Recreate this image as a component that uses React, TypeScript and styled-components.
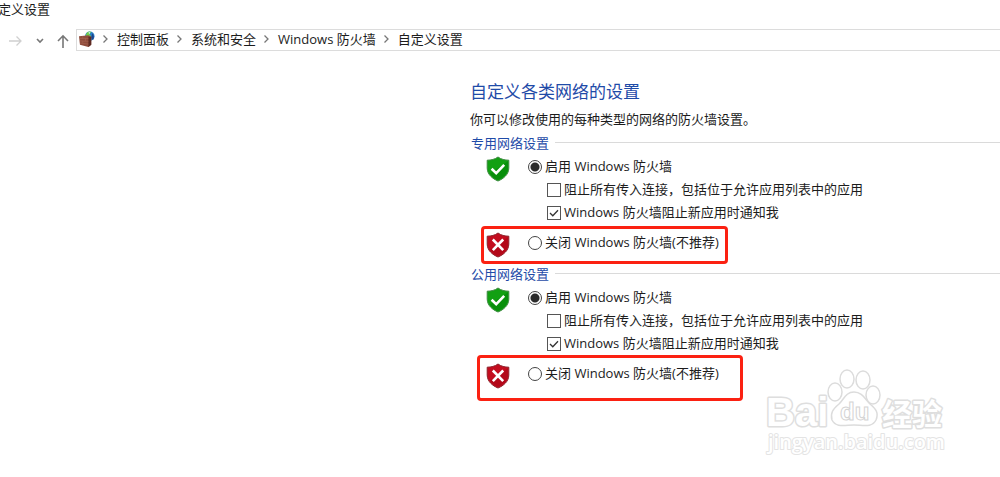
import React, { useState } from "react";
import styled, { createGlobalStyle } from "styled-components";

const GlobalStyle = createGlobalStyle`
  * { box-sizing: border-box; }
  body {
    margin: 0;
    background: #fff;
    color: #1c1c1c;
    font: 13px/20px "Open Sans", "Noto Sans CJK SC", sans-serif;
    overflow-x: hidden;
  }
`;

const Page = styled.div`
  position: relative;
  min-height: 100vh;
  overflow: hidden;
`;

const TitleBar = styled.header`
  height: 29px;
  margin-left: -2px;
  line-height: 18px;
`;

const NavBar = styled.nav`
  display: flex;
  height: 22px;
`;

const NavButtons = styled.div`
  display: flex;
  align-items: center;
  justify-content: space-between;
  width: 76px;
  padding: 2px 6px 0 8px;
`;

const NavButton = styled.button`
  display: flex;
  padding: 0;
  border: 0;
  background: none;
`;

const AddressBar = styled.ol`
  display: flex;
  flex: 1;
  align-items: center;
  margin: 0;
  padding: 0 0 2px 2px;
  list-style: none;
  border: 1px solid #dcdcdc;
  border-right: 0;
`;

const Crumb = styled.li`
  display: flex;
  align-items: center;
  white-space: nowrap;
`;

const CrumbLink = styled.a`
  color: inherit;
  text-decoration: none;
`;

const Separator = styled.svg`
  width: 22px;
  height: 12px;
`;

const Main = styled.main`
  padding: 30px 0 24px 47%;
  white-space: nowrap;
`;

const Heading = styled.h1`
  margin: 0;
  font-size: 17px;
  font-weight: 400;
  line-height: 22px;
  color: #1f4ba8;
`;

const Description = styled.p`
  margin: 6px 0 2px;
`;

const Group = styled.section`
  margin-bottom: 1px;
`;

const GroupTitle = styled.h2`
  display: flex;
  align-items: center;
  gap: 6px;
  height: 23px;
  margin: 0;
  padding-left: 1px;
  font-size: 13px;
  font-weight: 400;
  color: #1f4ba8;

  &::after {
    content: "";
    flex: 1;
    height: 1px;
    background: #dadada;
  }
`;

const OptionRow = styled.div<{ $tall?: boolean }>`
  position: relative;
  display: flex;
  align-items: center;
  gap: 18px;
  height: ${(p) => (p.$tall ? 38 : 23)}px;
  padding-left: 16px;
`;

const CheckRow = styled.div`
  display: flex;
  align-items: center;
  height: 23px;
  padding-left: 77px;
`;

const Choice = styled.label`
  display: flex;
  align-items: center;
  gap: 3px;
`;

const Radio = styled.input`
  appearance: none;
  width: 14px;
  height: 14px;
  margin: 2px 0 0;
  border: 1px solid #444;
  border-radius: 50%;
  background: #fff;

  &:checked {
    background: radial-gradient(circle, #2b2b2b 4px, #fff 5px);
  }
`;

const CheckInput = styled.input`
  appearance: none;
  width: 14px;
  height: 14px;
  margin: 0;
  border: 1px solid #555;
  background: #fff;
`;

const CheckBox = styled.span`
  display: grid;
  margin-top: 2px;

  > * {
    grid-area: 1 / 1;
  }

  svg {
    pointer-events: none;
  }
`;

const ShieldIcon = styled.svg`
  flex: none;
  width: 24px;
  height: 26px;
  margin-top: 6px;
`;

const Highlight = styled.div<{ $wide?: boolean }>`
  position: absolute;
  top: ${(p) => (p.$wide ? 1 : 3)}px;
  left: ${(p) => (p.$wide ? 7 : 11)}px;
  width: ${(p) => (p.$wide ? 266 : 247)}px;
  height: ${(p) => (p.$wide ? 46 : 38)}px;
  border: 3px solid #fb2112;
  border-radius: 4px;
  pointer-events: none;
`;

const Watermark = styled.svg`
  position: absolute;
  right: 50px;
  bottom: 17px;
  width: 190px;
  height: 94px;
  pointer-events: none;
`;

const Shield = ({ blocked }: { blocked?: boolean }) => (
  <ShieldIcon viewBox="0 0 24 26" aria-hidden="true">
    <path
      d="M12 1C9 3.300 5 4.200 1.200 4.200V12C1.200 18.500 6.500 22.700 12 25C17.500 22.700 22.800 18.500 22.800 12V4.200C19 4.200 15 3.300 12 1Z"
      fill={blocked ? "#c30d1f" : "#12a012"}
      stroke={blocked ? "#8d2029" : "#3c8a3f"}
    />
    <path
      d="M22 5.200V12C22 18 17 21.800 12 24C8 22.500 5.500 20 4 17.500Z"
      fill={blocked ? "#b30819" : "#088f0b"}
    />
    {blocked ? (
      <path d="M6.800 7.500L17.200 18.200M17.200 7.500L6.800 18.200" stroke="#fff" strokeWidth="2.600" />
    ) : (
      <path d="M5.600 12.800L10.200 17.200L18.200 8.800" fill="none" stroke="#fff" strokeWidth="2.600" />
    )}
  </ShieldIcon>
);

const Chevron = () => (
  <Separator viewBox="0 0 22 12" aria-hidden="true">
    <path d="M8.500 2.500L12 6L8.500 9.500" fill="none" stroke="#777" strokeWidth="1.300" />
  </Separator>
);

const FirewallIcon = () => (
  <svg width="16" height="18" viewBox="0 0 17 18" aria-hidden="true">
    <circle cx="11.500" cy="6" r="5" fill="#2b7fc4" />
    <path d="M8 3Q10 0 13 1.500L11 4L13 6L10 8L7 6Z" fill="#6ed04a" />
    <path d="M10 2L12 1.500L11 4Z" fill="#d8f4ff" />
    <path d="M14 3Q17 6 15 10L13 8Z" fill="#1c4590" />
    <path d="M0 6L10 5L13 6.500V15L10 17.500L1 15Z" fill="#8f4c3c" />
    <path d="M10 6.500L13 6.500V15L10 17.500Z" fill="#5d2b23" />
    <path d="M1 8.500L10 8.500M1 11L10 11.500M1 13.300L10 14.300M4 6V8.500M7 8.500V11M4 11V13.500" stroke="#ad6c58" strokeWidth=".5" />
  </svg>
);

const Check = ({ label, initial }: { label: string; initial: boolean }) => {
  const [on, setOn] = useState(initial);
  return (
    <CheckRow>
      <Choice>
        <CheckBox>
          <CheckInput type="checkbox" checked={on} onChange={() => setOn(!on)} />
          {on && (
            <svg width="14" height="14" viewBox="0 0 14 14" aria-hidden="true">
              <path d="M3 7L5.800 9.800L11 4.300" fill="none" stroke="#333" strokeWidth="1.300" />
            </svg>
          )}
        </CheckBox>
        {label}
      </Choice>
    </CheckRow>
  );
};

const NetworkGroup = ({ id, title, wide }: { id: string; title: string; wide?: boolean }) => (
  <Group role="radiogroup" aria-labelledby={id}>
    <GroupTitle id={id}>{title}</GroupTitle>
    <OptionRow>
      <Shield />
      <Choice>
        <Radio type="radio" name={`${id}-state`} defaultChecked />
        启用 Windows 防火墙
      </Choice>
    </OptionRow>
    <Check label="阻止所有传入连接，包括位于允许应用列表中的应用" initial={false} />
    <Check label="Windows 防火墙阻止新应用时通知我" initial />
    <OptionRow $tall>
      <Shield blocked />
      <Choice>
        <Radio type="radio" name={`${id}-state`} />
        关闭 Windows 防火墙(不推荐)
      </Choice>
      <Highlight $wide={wide} />
    </OptionRow>
  </Group>
);

const crumbs = ["控制面板", "系统和安全", "Windows 防火墙", "自定义设置"];

export default function App() {
  return (
    <Page>
      <GlobalStyle />
      <TitleBar>定义设置</TitleBar>
      <NavBar>
        <NavButtons>
          <NavButton aria-label="前进">
            <svg width="14" height="12" viewBox="0 0 14 12" fill="none" stroke="#d0d0d0" strokeWidth="1.300">
              <path d="M1 6H13M8.500 1.500L13 6L8.500 10.500" />
            </svg>
          </NavButton>
          <NavButton aria-label="最近位置">
            <svg width="10" height="8" viewBox="0 0 10 8" fill="none" stroke="#777" strokeWidth="1.600">
              <path d="M3 2L6 5L9 2" />
            </svg>
          </NavButton>
          <NavButton aria-label="上移">
            <svg width="14" height="14" viewBox="0 0 14 14" fill="none" stroke="#777" strokeWidth="1.600">
              <path d="M7 14V2M2 7L7 1.800L12 7" />
            </svg>
          </NavButton>
        </NavButtons>
        <AddressBar>
          <FirewallIcon />
          {crumbs.map((name) => (
            <Crumb key={name}>
              <Chevron />
              <CrumbLink href="#">{name}</CrumbLink>
            </Crumb>
          ))}
        </AddressBar>
      </NavBar>
      <Main>
        <Heading>自定义各类网络的设置</Heading>
        <Description>你可以修改使用的每种类型的网络的防火墙设置。</Description>
        <NetworkGroup id="private" title="专用网络设置" />
        <NetworkGroup id="public" title="公用网络设置" wide />
      </Main>
      <Watermark viewBox="0 0 190 94" aria-hidden="true">
        <g
          fill="#fff"
          stroke="#dedede"
          strokeWidth="3"
          strokeLinejoin="round"
          paintOrder="stroke"
          fontFamily="'Liberation Sans', 'Noto Sans CJK SC', sans-serif"
          fontWeight="700"
        >
          <text x="6" y="60" fontSize="40">Bai</text>
          <text x="122" y="59" fontSize="30">经验</text>
        </g>
        <g fill="#fff" stroke="#dcdcdc" strokeWidth="1.500">
          <ellipse cx="75" cy="26" rx="7" ry="9" />
          <ellipse cx="87" cy="13" rx="7" ry="9" />
          <ellipse cx="103" cy="14" rx="7" ry="9" />
          <ellipse cx="113" cy="29" rx="7" ry="9" />
          <path d="M94 26C102 26 105 33 110 38C116 43 119 47 116 54C112 62 103 59 94 59C85 59 76 62 72 54C70 47 73 43 79 38C84 33 86 26 94 26Z" />
        </g>
        <text
          x="80"
          y="54"
          fontFamily="'Liberation Sans', sans-serif"
          fontSize="24"
          fontWeight="700"
          fill="#fff"
          stroke="#d4d4d4"
        >
          du
        </text>
        <text
          x="8"
          y="83"
          fontFamily="'Open Sans', sans-serif"
          fontSize="20"
          fontWeight="600"
          fill="#fff"
          stroke="#e4e4e4"
          strokeWidth="2"
          strokeLinejoin="round"
          paintOrder="stroke"
        >
          jingyan.baidu.com
        </text>
      </Watermark>
    </Page>
  );
}
